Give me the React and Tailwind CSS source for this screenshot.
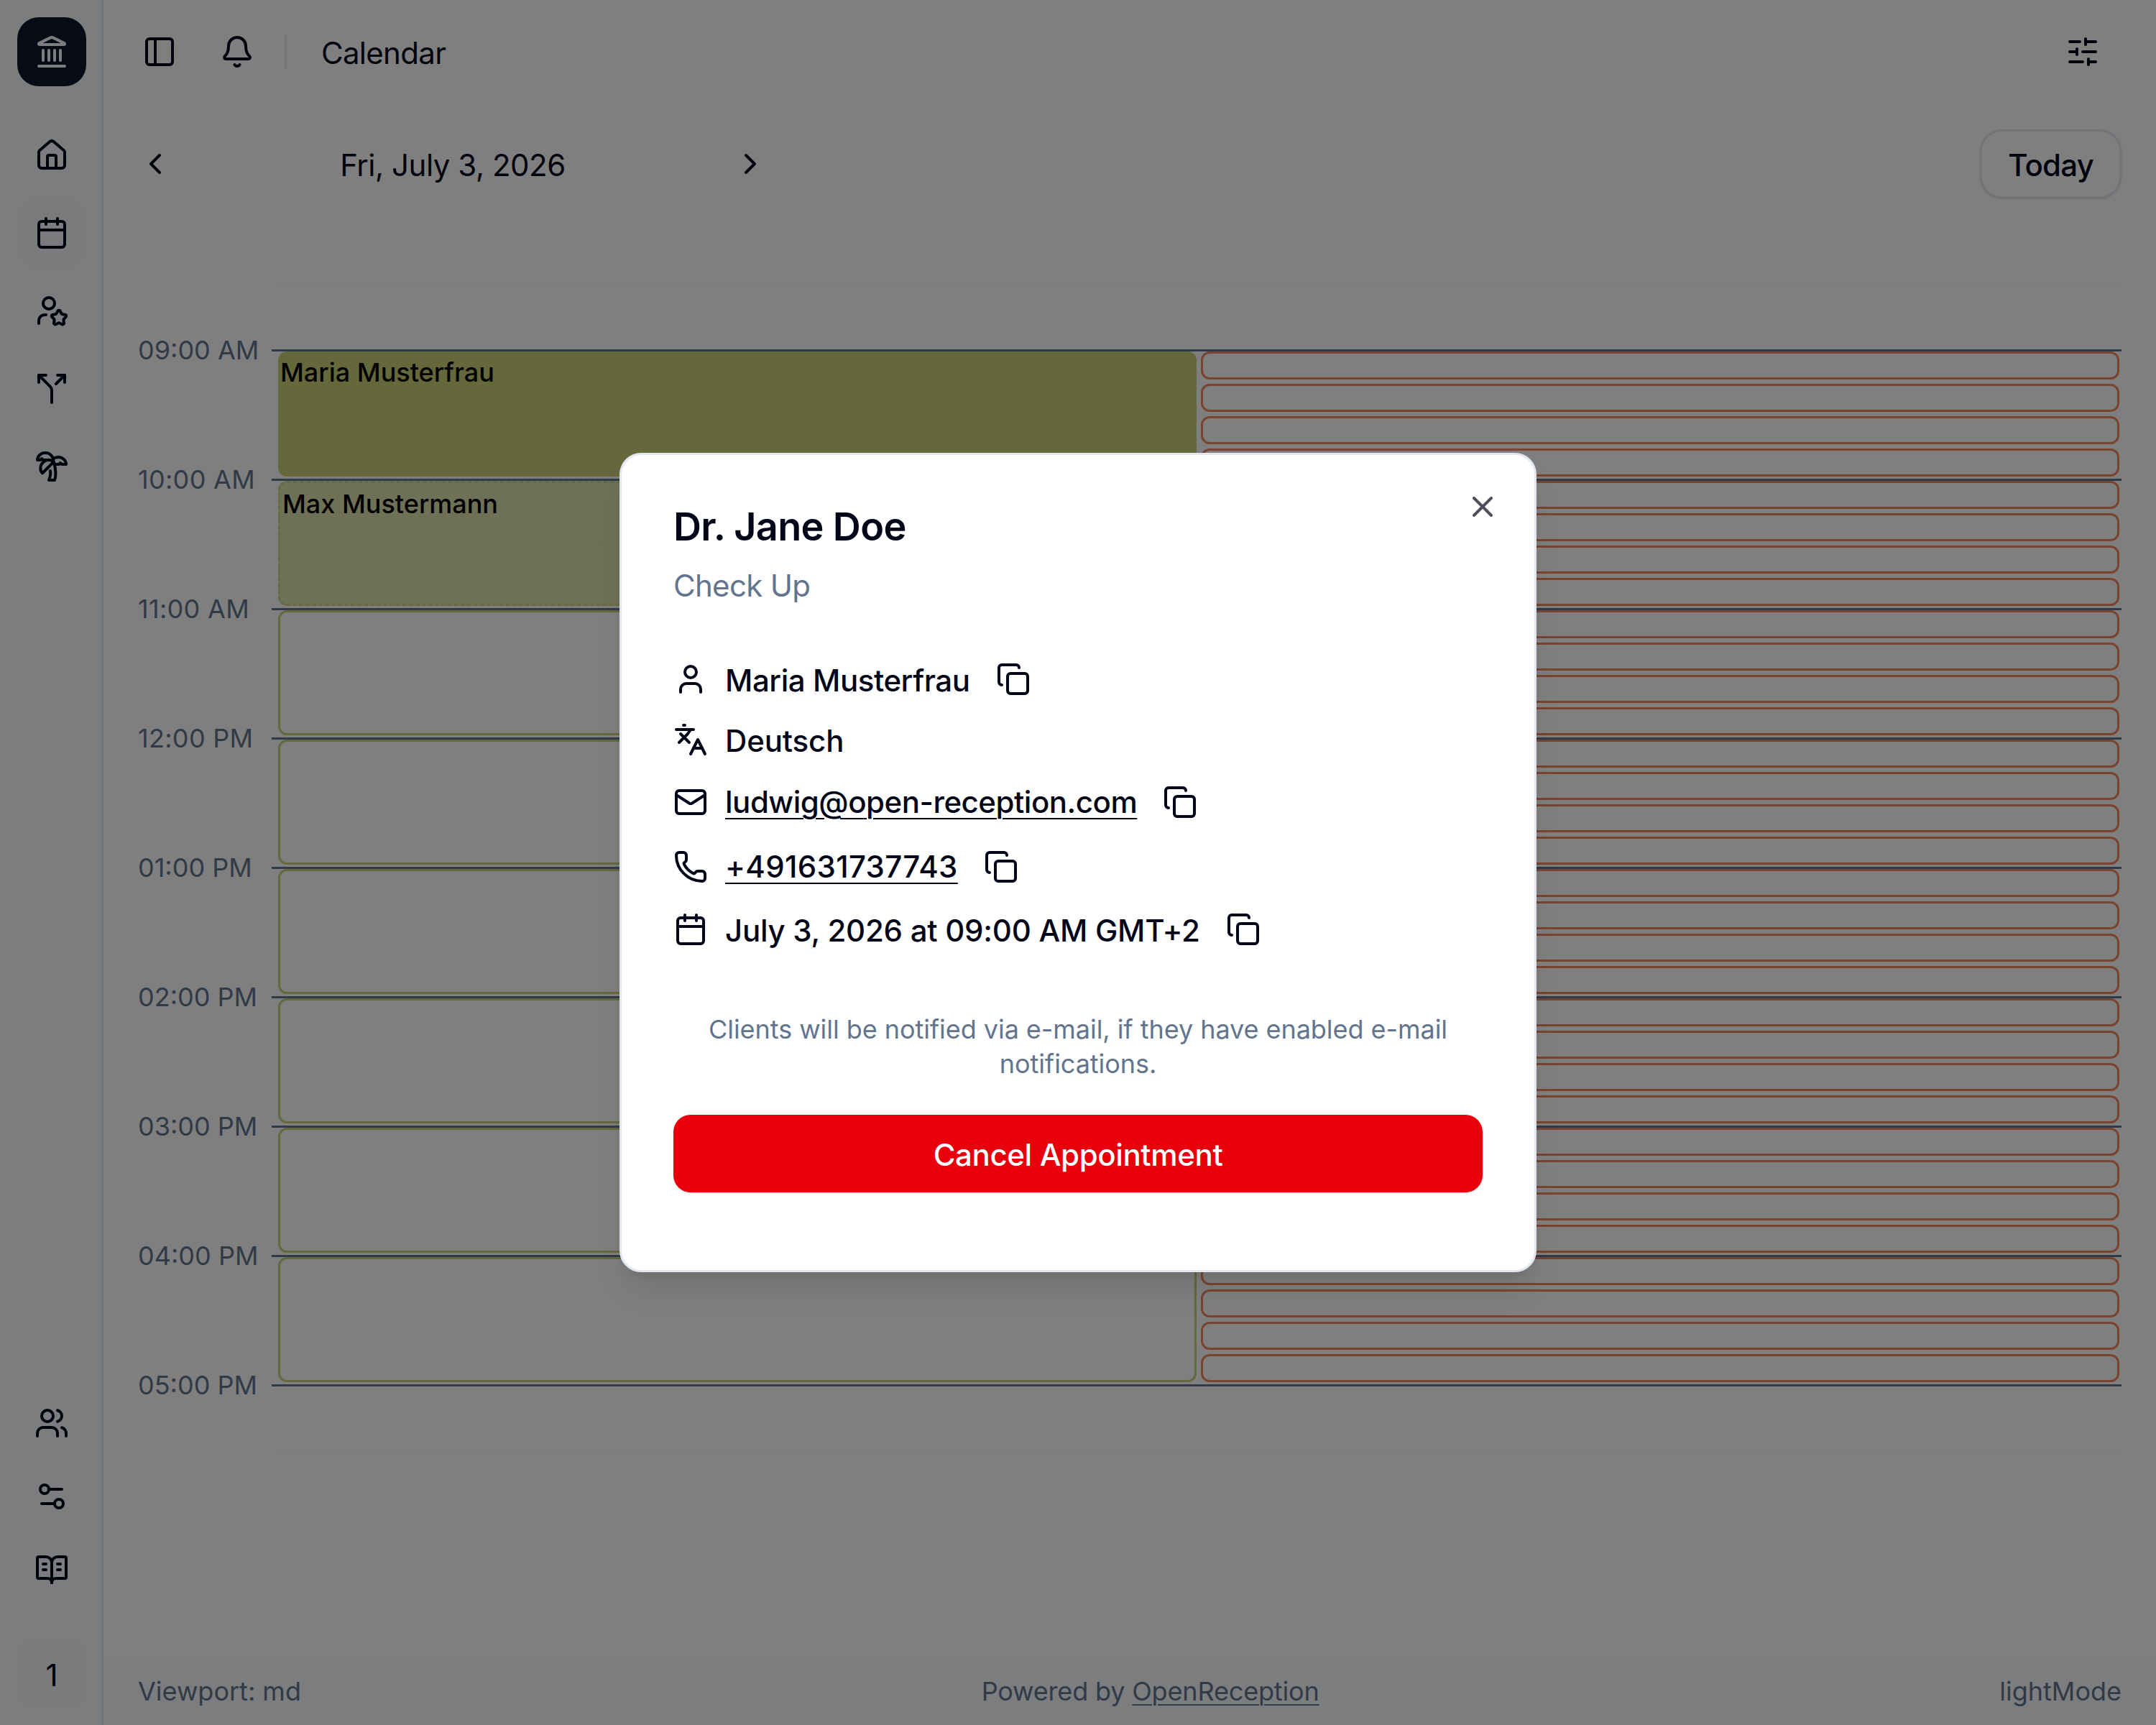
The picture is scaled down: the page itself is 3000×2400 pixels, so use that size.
import {
  Bell,
  BookOpenText,
  Calendar,
  ChevronLeft,
  ChevronRight,
  Copy,
  House,
  Landmark,
  Languages,
  Mail,
  PanelLeft,
  Phone,
  Settings2,
  SlidersHorizontal,
  Split,
  TreePalm,
  User,
  Users,
  X,
} from "lucide-react";

/* ----------------- Data ----------------- */

const HOURS = [
  "09:00 AM",
  "10:00 AM",
  "11:00 AM",
  "12:00 PM",
  "01:00 PM",
  "02:00 PM",
  "03:00 PM",
  "04:00 PM",
  "05:00 PM",
];

const BOOKED = [
  { name: "Maria Musterfrau", confirmed: true },
  { name: "Max Mustermann", confirmed: false },
];

const FREE_HOURS = 6;
const QUARTERS = 32;

/* ----------------- Icons ----------------- */

function UserStar({ className = "" }) {
  return (
    <svg
      className={className}
      viewBox="0 0 24 24"
      fill="none"
      stroke="currentColor"
      strokeWidth="2"
      strokeLinecap="round"
      strokeLinejoin="round"
    >
      <path d="M16.051 12.616a1 1 0 0 1 1.909.024l.737 1.452a1 1 0 0 0 .737.535l1.634.256a1 1 0 0 1 .588 1.806l-1.172 1.168a1 1 0 0 0-.282.866l.259 1.613a1 1 0 0 1-1.541 1.134l-1.465-.75a1 1 0 0 0-.912 0l-1.465.75a1 1 0 0 1-1.539-1.133l.258-1.613a1 1 0 0 0-.282-.866l-1.156-1.153a1 1 0 0 1 .572-1.822l1.633-.256a1 1 0 0 0 .737-.535z" />
      <path d="M8 15H7a4 4 0 0 0-4 4v2" />
      <circle cx="10" cy="7" r="4" />
    </svg>
  );
}

/* ----------------- Sidebar ----------------- */

function NavButton({ icon: Icon, active = false }) {
  return (
    <div
      className={`flex size-24 items-center justify-center rounded-3xl ${active ? "bg-[#f4f7fa]" : ""}`}
    >
      <Icon className="size-12" />
    </div>
  );
}

function Sidebar() {
  return (
    <aside className="flex w-36 shrink-0 flex-col border-r-[3px] border-slate-200 bg-slate-50 pl-6">
      <div className="py-6">
        <div className="flex size-24 items-center justify-center rounded-[30px] bg-slate-900 text-slate-50">
          <Landmark className="size-12" />
        </div>
      </div>

      <nav className="flex flex-1 flex-col gap-3 pt-6">
        <NavButton icon={House} />
        <NavButton icon={Calendar} active />
        <NavButton icon={UserStar} />
        <NavButton icon={Split} />
        <NavButton icon={TreePalm} />
      </nav>

      <nav className="flex w-24 flex-col items-center gap-[54px] pb-[72px]">
        <Users className="size-12" />
        <Settings2 className="size-12" />
        <BookOpenText className="size-12" />
      </nav>

      <div className="mb-6 flex size-24 items-center justify-center rounded-3xl bg-[#f5f8fa] pt-1 text-[42px]">
        1
      </div>
    </aside>
  );
}

/* ----------------- Top bars ----------------- */

function TopBar() {
  return (
    <header className="flex h-36 items-center pr-[78px] pl-[54px]">
      <PanelLeft className="size-12" />
      <Bell className="ml-[60px] size-12" />
      <div className="ml-[42px] h-12 w-[3px] bg-slate-200" />
      <h1 className="ml-12 pt-1 text-[42px] leading-[60px] tracking-[-0.7px]">Calendar</h1>
      <SlidersHorizontal className="ml-auto size-12" />
    </header>
  );
}

function DateBar() {
  return (
    <div className="flex h-24 items-center justify-between">
      <div className="flex w-[876px] items-center justify-between">
        <ChevronLeft className="size-12" />
        <span className="pt-1 text-[42px] leading-[60px] tracking-[-0.45px]">Fri, July 3, 2026</span>
        <ChevronRight className="size-12" />
      </div>
      <button className="h-24 rounded-[30px] border-[3px] border-slate-200 bg-white px-9 pt-0.5 text-[42px] font-medium tracking-[-0.8px] shadow-sm">
        Today
      </button>
    </div>
  );
}

/* ----------------- Day grid ----------------- */

function TimeAxis() {
  return (
    <div className="flex w-[186px] flex-col pt-px">
      {HOURS.map((h) => (
        <div
          key={h}
          className={`flex h-[180px] items-center text-[36px] text-slate-500 ${
            h.startsWith("1") ? "tracking-[0.3px]" : ""
          }`}
        >
          {h}
        </div>
      ))}
    </div>
  );
}

function HourLines() {
  return (
    <div className="absolute inset-x-0 top-0 flex flex-col">
      <div className="mb-[87px] ml-1.5 h-[3px] bg-[#f6f8fa]" />
      {HOURS.map((h) => (
        <div key={h} className="h-[180px]">
          <div className="h-[3px] bg-slate-500" />
          <div className="mt-[87px] ml-1.5 h-[3px] bg-slate-50" />
        </div>
      ))}
    </div>
  );
}

function Booking({ name, confirmed }) {
  return (
    <div
      className={`h-[174px] rounded-xl p-[3px] text-[36px] leading-[52px] font-medium text-black ${
        confirmed ? "bg-[#c8d076]" : "border-[3px] border-dashed border-[#c8d076]/70 bg-[#c8ce78]/60"
      }`}
    >
      {name}
    </div>
  );
}

function DayGrid() {
  return (
    <div className="flex">
      <TimeAxis />

      <div className="relative flex-1">
        <HourLines />

        <div className="relative grid grid-cols-2 gap-1.5 pt-[93px] pr-[3px] pl-[9px]">
          <div className="flex flex-col gap-1.5">
            {BOOKED.map((b) => (
              <Booking key={b.name} {...b} />
            ))}
            {Array.from({ length: FREE_HOURS }, (_, i) => (
              <div key={i} className="h-[174px] rounded-xl border-[3px] border-[#c8d076] bg-white" />
            ))}
          </div>

          <div className="flex flex-col gap-1.5">
            {Array.from({ length: QUARTERS }, (_, i) => (
              <div key={i} className="h-[39px] rounded-xl border-[3px] border-[#f08860] bg-white" />
            ))}
          </div>
        </div>
      </div>
    </div>
  );
}

function Footer() {
  return (
    <footer className="flex h-24 items-center justify-between bg-slate-50 px-12 pt-0.5 text-[36px] text-slate-500">
      <span>Viewport: md</span>
      <span className="tracking-[-0.16px]">
        Powered by <a className="underline decoration-2 underline-offset-[5px]">OpenReception</a>
      </span>
      <span>lightMode</span>
    </footer>
  );
}

/* ----------------- Appointment dialog ----------------- */

function DetailRow({ icon: Icon, text, link = false, copy = true, spacing = "" }) {
  return (
    <div className={`flex items-center ${link ? "h-[66px]" : "h-[60px]"}`}>
      <Icon className="size-12" />
      {link ? (
        <a className={`ml-6 underline decoration-2 underline-offset-[7px] ${spacing}`}>{text}</a>
      ) : (
        <span className={`ml-6 pt-1 ${spacing}`}>{text}</span>
      )}
      {copy && <Copy className="ml-9 size-12" />}
    </div>
  );
}

function AppointmentDialog() {
  return (
    <div className="relative flex h-[1140px] w-[1276px] flex-col rounded-[30px] border-[3px] border-slate-200 bg-white px-[72px] pt-[73px] shadow-[0_30px_45px_-9px_rgb(0_0_0/0.1),0_12px_18px_-12px_rgb(0_0_0/0.1)]">
      <X className="absolute top-12 right-12 size-12 opacity-70" />

      <h2 className="text-[54px] leading-[54px] font-semibold tracking-[-0.65px]">Dr. Jane Doe</h2>
      <p className="mt-[25px] text-[42px] leading-[60px] tracking-[-0.7px] text-slate-500">Check Up</p>

      <div className="mt-[70px] flex flex-col gap-6 text-[42px] leading-[60px] font-medium">
        <DetailRow icon={User} text="Maria Musterfrau" spacing="tracking-[-0.43px]" />
        <DetailRow icon={Languages} text="Deutsch" copy={false} spacing="tracking-[-0.15px]" />
        <DetailRow icon={Mail} text="ludwig@open-reception.com" link spacing="tracking-[-0.48px]" />
        <DetailRow icon={Phone} text="+491631737743" link spacing="tracking-[0.32px]" />
        <DetailRow icon={Calendar} text="July 3, 2026 at 09:00 AM GMT+2" spacing="tracking-[-0.26px]" />
      </div>

      <p className="mt-[85px] text-center text-[36px] leading-[48px] tracking-[-0.05px] text-slate-500">
        Clients will be notified via e-mail, if they have enabled e-mail notifications.
      </p>
      <button className="mt-[47px] h-[108px] rounded-3xl bg-[#e7000b] pt-0.5 text-[42px] font-medium tracking-[-0.37px] text-white shadow-sm">
        Cancel Appointment
      </button>
    </div>
  );
}

/* ----------------- App ----------------- */

export default function App() {
  return (
    <div className="relative flex h-[2400px] w-[3000px] overflow-hidden bg-white font-['Inter',sans-serif] text-slate-950">
      <Sidebar />

      <main className="flex flex-1 flex-col">
        <TopBar />
        <div className="flex flex-1 flex-col px-12 pt-9">
          <DateBar />
          <div className="mt-[120px]">
            <DayGrid />
          </div>
        </div>
        <Footer />
      </main>

      <div className="absolute inset-0 flex items-center justify-center bg-black/50">
        <AppointmentDialog />
      </div>
    </div>
  );
}
